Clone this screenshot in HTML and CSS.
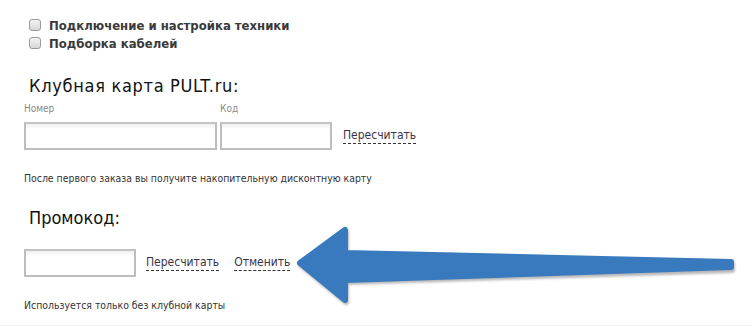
FILE: index.html
```html
<!DOCTYPE html>
<html>
<head>
<meta charset="utf-8">
<link rel="stylesheet" href="styles.css">
</head>
<body>
<div class="page">
  <ul class="services">
    <li><span class="cb"></span><span class="svc">Подключение и настройка техники</span></li>
    <li><span class="cb"></span><span class="svc">Подборка кабелей</span></li>
  </ul>

  <h2 class="title title-card">Клубная карта PULT.ru:</h2>
  <div class="labels">
    <span class="lbl lbl-num">Номер</span>
    <span class="lbl">Код</span>
  </div>
  <div class="row">
    <span class="inp inp-num"></span>
    <span class="inp inp-code"></span>
    <a class="link">Пересчитать</a>
  </div>
  <p class="note note-card">После первого заказа вы получите накопительную дисконтную карту</p>

  <h2 class="title title-promo">Промокод:</h2>
  <div class="row row-promo">
    <span class="inp inp-promo"></span>
    <a class="link">Пересчитать</a>
    <a class="link link-cancel">Отменить</a>
  </div>
  <p class="note note-promo">Используется только без клубной карты</p>
  <div class="bottom-line"></div>

  <svg class="arrow" width="752" height="328" viewBox="0 0 752 328">
    <defs>
      <filter id="blur" x="-10%" y="-20%" width="120%" height="140%">
        <feGaussianBlur stdDeviation="1"/>
      </filter>
    </defs>
    <polygon points="301,265 346,232 346,255 732,264 732,270 346,282 346,302" fill="#b9b9b9" stroke="#b9b9b9" stroke-width="6" stroke-linejoin="round" filter="url(#blur)"/>
    <polygon points="300,263 345,230 345,253 731,262 731,267 345,280 345,300" fill="#3979bd" stroke="#3979bd" stroke-width="6" stroke-linejoin="round"/>
  </svg>
</div>
</body>
</html>
```

FILE: styles.css
```css
html, body {
  margin: 0;
  padding: 0;
  background: #ffffff;
}
.page {
  position: relative;
  width: 752px;
  height: 328px;
  overflow: hidden;
  font-family: "DejaVu Sans Condensed", "DejaVu Sans", sans-serif;
  font-stretch: condensed;
  color: #333333;
}
.services {
  list-style: none;
  margin: 0;
  padding: 16px 0 0 29px;
}
.services li {
  display: flex;
  align-items: center;
  height: 18px;
}
.cb {
  width: 10px;
  height: 10px;
  border: 1px solid #9a9a9a;
  border-radius: 3px;
  background: linear-gradient(#f2f2f2, #d8d8d8);
  margin-right: 8px;
  flex: none;
}
.svc {
  font-weight: bold;
  font-size: 13px;
  color: #3a3a3a;
}
.title {
  margin: 0;
  padding: 0 0 0 29px;
  font-weight: normal;
  font-size: 18px;
  color: #111111;
  margin-top: 23px;
  line-height: 22px;
}
.title-card {
  letter-spacing: 0.7px;
}
.labels {
  display: flex;
  padding-left: 24px;
  margin-top: 6px;
  height: 14px;
}
.lbl {
  font-size: 10px;
  color: #8a8a8a;
}
.lbl-num {
  width: 196px;
}
.row {
  display: flex;
  align-items: center;
  padding-left: 24px;
  margin-top: 5px;
  height: 28px;
}
.inp {
  box-sizing: border-box;
  height: 28px;
  border: 2px solid #bdbdbd;
  border-top-color: #c4c4c4;
  background: linear-gradient(#f0f0f0, #ffffff 5px);
}
.inp-num {
  width: 193px;
  margin-right: 3px;
}
.inp-code {
  width: 112px;
  margin-right: 11px;
}
.link {
  font-size: 12px;
  color: #3b3347;
  border-bottom: 1px dashed #333333;
  line-height: 15px;
  padding-bottom: 0;
}
.note {
  margin: 0;
  padding-left: 24px;
  font-size: 10.4px;
  color: #333333;
}
.note-card {
  margin-top: 22px;
}
.title-promo {
  margin-top: 23px;
}
.row-promo {
  margin-top: 20px;
}
.inp-promo {
  width: 112px;
  margin-right: 10px;
}
.link-cancel {
  margin-left: 15px;
}
.note-promo {
  margin-top: 22px;
}
.bottom-line {
  position: absolute;
  left: 0;
  right: 0;
  top: 325px;
  height: 1px;
  background: #f2f2f2;
}
.arrow {
  position: absolute;
  left: 0;
  top: 0;
}
```
